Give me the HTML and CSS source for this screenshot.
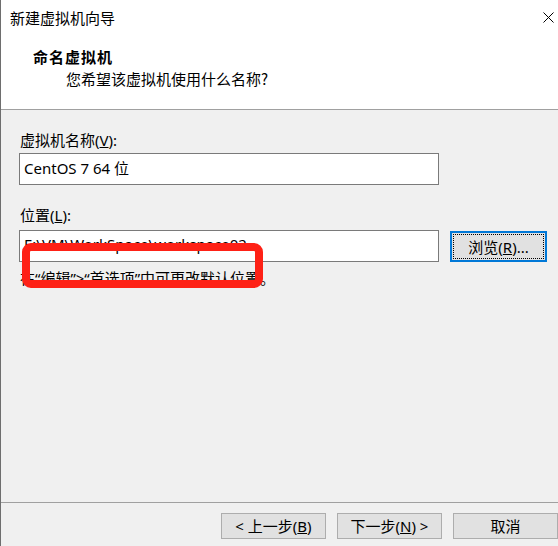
FILE: index.html
```html
<!DOCTYPE html>
<html lang="zh-CN">
<head>
<meta charset="utf-8">
<title>新建虚拟机向导</title>
<link rel="stylesheet" href="styles.css">
</head>
<body>
<div class="window">
  <header class="header">
    <div class="titlebar">
      <span class="title">新建虚拟机向导</span>
      <svg class="close" width="11" height="11" viewBox="0 0 11 11"><path d="M0.5 0.5 L10.5 10.5 M10.5 0.5 L0.5 10.5" stroke="#000" stroke-width="1" fill="none"/></svg>
    </div>
    <div class="heading">命名虚拟机</div>
    <div class="subheading">您希望该虚拟机使用什么名称?</div>
  </header>
  <main class="content">
    <div class="label">虚拟机名称(<u>V</u>):</div>
    <div class="field">CentOS 7 64 位</div>
    <div class="label label-2">位置(<u>L</u>):</div>
    <div class="row">
      <div class="field field-path">E:\VM\WorkSpace\workspace02</div>
      <button class="btn browse">浏览(<u>R</u>)...</button>
    </div>
    <div class="hint">在“编辑”&gt;“首选项”中可更改默认位置。</div>
    <div class="annot"></div>
  </main>
  <footer class="footer">
    <button class="btn">&lt; 上一步(<u>B</u>)</button>
    <button class="btn">下一步(<u>N</u>) &gt;</button>
    <button class="btn">取消</button>
  </footer>
</div>
</body>
</html>
```
FILE: styles.css
```css
html, body {
  margin: 0;
  padding: 0;
  width: 558px;
  height: 546px;
  overflow: hidden;
  background: #f0f0f0;
}
body {
  font-family: "Noto Sans", "Noto Sans CJK SC", sans-serif;
  font-size: 15px;
  color: #000;
}
.window {
  box-sizing: border-box;
  width: 558px;
  height: 546px;
  border-left: 1px solid #6e6e6e;
  display: flex;
  flex-direction: column;
}
.header {
  box-sizing: border-box;
  height: 110px;
  background: #fff;
  border-bottom: 1px solid #a0a0a0;
}
.titlebar {
  height: 36px;
  display: flex;
  align-items: center;
  justify-content: space-between;
  padding: 0 4px 0 9px;
}
.title {
  line-height: 36px;
  font-family: "Noto Sans CJK SC", sans-serif;
}
.close {
  display: block;
  margin-top: -1px;
}
.heading {
  margin-top: 11px;
  padding-left: 32px;
  line-height: 20px;
  font-weight: 700;
  letter-spacing: 1px;
  font-family: "Noto Sans CJK SC", sans-serif;
}
.subheading {
  margin-top: 2px;
  padding-left: 65px;
  line-height: 20px;
  font-family: "Noto Sans CJK SC", sans-serif;
}
.content {
  position: relative;
  flex: 1;
  padding: 20px 0 0 18px;
}
.label {
  line-height: 20px;
  padding-left: 1px;
}
.label-2 {
  margin-top: 20px;
}
.field {
  box-sizing: border-box;
  width: 420px;
  height: 32px;
  margin-top: 3px;
  border: 1px solid #7a7a7a;
  background: #fff;
  padding-left: 4px;
  line-height: 29px;
  white-space: nowrap;
  overflow: hidden;
}
.row {
  display: flex;
  align-items: flex-start;
  margin-top: 5px;
}
.field-path {
  margin-top: 0;
  line-height: 26px;
}
.btn {
  box-sizing: border-box;
  height: 26px;
  border: 1px solid #adadad;
  background: #e1e1e1;
  font-family: "Noto Sans", "Noto Sans CJK SC", sans-serif;
  font-size: 15px;
  color: #000;
  padding: 0;
  line-height: 22px;
}
.browse {
  width: 97px;
  height: 31px;
  margin-left: 11px;
  margin-top: 1px;
  border: 2px solid #0078d7;
  outline: 1px dotted #000;
  outline-offset: -4px;
}
.hint {
  margin-top: 6px;
  padding-left: 1px;
  line-height: 20px;
}
.annot {
  position: absolute;
  left: 21px;
  top: 133px;
  width: 241px;
  height: 45px;
  box-sizing: border-box;
  border: 8px solid #fe2116;
  border-radius: 9px;
}
.footer {
  box-sizing: border-box;
  height: 44px;
  border-top: 1px solid #a0a0a0;
  display: flex;
  justify-content: flex-end;
  gap: 11px;
  padding: 10px 0 0 0;
}
.footer .btn {
  width: 105px;
}
```
